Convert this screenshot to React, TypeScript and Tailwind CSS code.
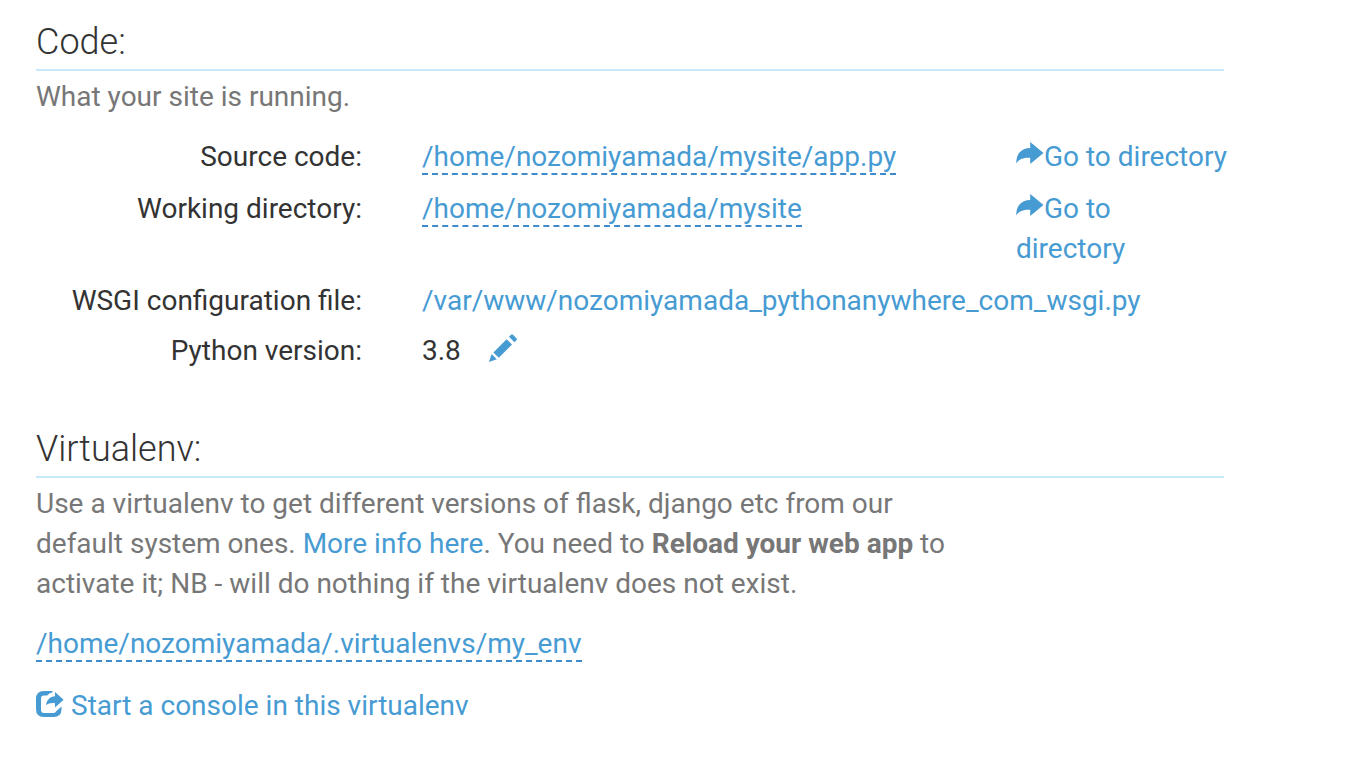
import React from "react";

const link = "text-[#479bd3]";
const editable = "border-b-2 border-dashed border-[#3d8bca] leading-8 text-[#479bd3]";
const heading = "border-b-2 border-[#c6eafb] pb-1.5 text-[36px] font-light leading-[42px] text-[#333]";

function ShareArrow() {
  return (
    <svg viewBox="0 0 28 22" className="inline-block h-[22px] w-7 align-[2px]" fill="currentColor" aria-hidden="true">
      <path d="M14.2 0 L27.5 11 L14.2 22 V15.8 C8 15.5 3 17 0.3 21.5 C0 13 4.5 6 14.2 6 Z" />
    </svg>
  );
}

function Pencil() {
  return (
    <svg viewBox="0 0 28 28" className="h-7 w-7" fill="currentColor" aria-hidden="true">
      <path d="M0 28 L2.6 20 L7.8 25.2 Z M4.4 18.4 L17.6 5.2 L23 10.6 L9.8 23.8 Z M20 2.8 L22 .8 Q23 -.2 24 .8 L27.4 4.2 Q28.4 5.2 27.4 6.2 L25.4 8.2 Z" />
    </svg>
  );
}

function ShareBox() {
  return (
    <svg viewBox="0 0 28 26" className="mr-[7px] inline-block h-[26px] w-7 align-[-2px]" fill="currentColor" aria-hidden="true">
      <path d="M16.5 0 H8 Q0 0 0 8 V18 Q0 26 8 26 H17.5 Q25.5 26 25.5 18 V15.6 L20.2 20.2 Q19.8 22 17.5 22 H8 Q5 22 5 19 V7.5 Q5 4.5 8 4.5 H11.2 Q13 2.2 16.5 1.2 Z" />
      <path d="M19 1 L27.6 8.8 L19 16.6 V12.2 C15 11.8 12 12.6 10 14.2 C10.6 9 14 5.4 19 5.2 Z" />
    </svg>
  );
}

export default function App() {
  return (
    <main className="max-w-[1260px] px-9 pt-[21px] font-['Roboto',sans-serif] text-[28px] leading-10 text-[#333]">
      <section>
        <h2 className={heading}>Code:</h2>
        <p className="mt-1.5 text-[#777]">What your site is running.</p>
        <dl className="mt-5 grid grid-cols-[326px_594px_1fr] gap-y-2.5">
          <dt className="pb-0.5 text-right">Source code:</dt>
          <dd className="pb-0.5 pl-[60px]"><button type="button" className={editable}>/home/nozomiyamada/mysite/app.py</button></dd>
          <dd className="whitespace-nowrap pb-0.5 pl-[60px]"><a href="#source" className={link}><ShareArrow />Go to directory</a></dd>
          <dt className="pb-0.5 text-right">Working directory:</dt>
          <dd className="pb-0.5 pl-[60px]"><button type="button" className={editable}>/home/nozomiyamada/mysite</button></dd>
          <dd className="pb-0.5 pl-[60px]"><a href="#working" className={link}><ShareArrow />Go to<br />directory</a></dd>
          <dt className="text-right">WSGI configuration file:</dt>
          <dd className="col-span-2 pl-[60px]"><a href="#wsgi" className={link}>/var/www/nozomiyamada_pythonanywhere_com_wsgi.py</a></dd>
          <dt className="text-right">Python version:</dt>
          <dd className="col-span-2 flex items-center pl-[60px]">3.8<button type="button" aria-label="Edit Python version" className={`${link} mb-1.5 ml-7`}><Pencil /></button></dd>
        </dl>
      </section>
      <section className="mt-[57px]">
        <h2 className={heading}>Virtualenv:</h2>
        <p className="mt-1.5 max-w-[920px] text-[#777]">
          Use a virtualenv to get different versions of flask, django etc from our default system ones. <a href="#info" className={link}>More info here</a>. You need to <b>Reload your web app</b> to activate it; NB - will do nothing if the virtualenv does not exist.
        </p>
        <div className="mt-5"><button type="button" className={editable}>/home/nozomiyamada/.virtualenvs/my_env</button></div>
        <div className="mt-[22px]"><a href="#console" className={link}><ShareBox />Start a console in this virtualenv</a></div>
      </section>
    </main>
  );
}
